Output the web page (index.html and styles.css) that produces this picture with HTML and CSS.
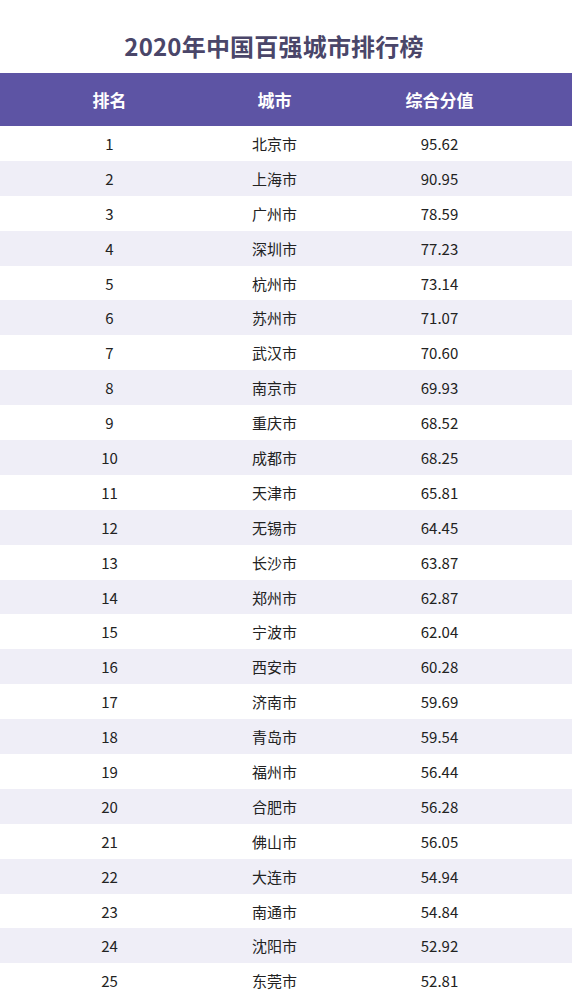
FILE: index.html
```html
<!DOCTYPE html>
<html lang="zh-CN">
<head>
<meta charset="utf-8">
<title>2020年中国百强城市排行榜</title>
<link rel="stylesheet" href="styles.css">
</head>
<body>
<div class="page">
  <h1 class="title">2020年中国百强城市排行榜</h1>
  <div class="table">
    <div class="row head"><span>排名</span><span>城市</span><span>综合分值</span></div>
    <div class="row"><span>1</span><span>北京市</span><span>95.62</span></div>
    <div class="row"><span>2</span><span>上海市</span><span>90.95</span></div>
    <div class="row"><span>3</span><span>广州市</span><span>78.59</span></div>
    <div class="row"><span>4</span><span>深圳市</span><span>77.23</span></div>
    <div class="row"><span>5</span><span>杭州市</span><span>73.14</span></div>
    <div class="row"><span>6</span><span>苏州市</span><span>71.07</span></div>
    <div class="row"><span>7</span><span>武汉市</span><span>70.60</span></div>
    <div class="row"><span>8</span><span>南京市</span><span>69.93</span></div>
    <div class="row"><span>9</span><span>重庆市</span><span>68.52</span></div>
    <div class="row"><span>10</span><span>成都市</span><span>68.25</span></div>
    <div class="row"><span>11</span><span>天津市</span><span>65.81</span></div>
    <div class="row"><span>12</span><span>无锡市</span><span>64.45</span></div>
    <div class="row"><span>13</span><span>长沙市</span><span>63.87</span></div>
    <div class="row"><span>14</span><span>郑州市</span><span>62.87</span></div>
    <div class="row"><span>15</span><span>宁波市</span><span>62.04</span></div>
    <div class="row"><span>16</span><span>西安市</span><span>60.28</span></div>
    <div class="row"><span>17</span><span>济南市</span><span>59.69</span></div>
    <div class="row"><span>18</span><span>青岛市</span><span>59.54</span></div>
    <div class="row"><span>19</span><span>福州市</span><span>56.44</span></div>
    <div class="row"><span>20</span><span>合肥市</span><span>56.28</span></div>
    <div class="row"><span>21</span><span>佛山市</span><span>56.05</span></div>
    <div class="row"><span>22</span><span>大连市</span><span>54.94</span></div>
    <div class="row"><span>23</span><span>南通市</span><span>54.84</span></div>
    <div class="row"><span>24</span><span>沈阳市</span><span>52.92</span></div>
    <div class="row"><span>25</span><span>东莞市</span><span>52.81</span></div>
  </div>
</div>
</body>
</html>
```

FILE: styles.css
```css
html, body {
  margin: 0;
  padding: 0;
  background: #ffffff;
}

.page {
  width: 572px;
  font-family: "Noto Sans CJK SC", "Noto Sans", sans-serif;
}

.title {
  box-sizing: border-box;
  height: 73px;
  margin: 0;
  padding: 32px 24px 0 0;
  font-size: 24px;
  line-height: 28px;
  font-weight: 700;
  color: #4a4669;
  text-align: center;
  letter-spacing: 0.2px;
}

.table {
  display: flex;
  flex-direction: column;
}

.row {
  display: grid;
  grid-template-columns: repeat(3, 165px);
  padding-left: 27px;
  height: 34.9px;
  align-items: center;
  font-size: 15px;
  font-weight: 400;
  color: #222222;
}

.row span {
  text-align: center;
}

.row:nth-child(odd) {
  background: #efeef7;
}

.row.head {
  height: 53px;
  background: #5d54a4;
  color: #ffffff;
  font-size: 17px;
  font-weight: 700;
}
```
